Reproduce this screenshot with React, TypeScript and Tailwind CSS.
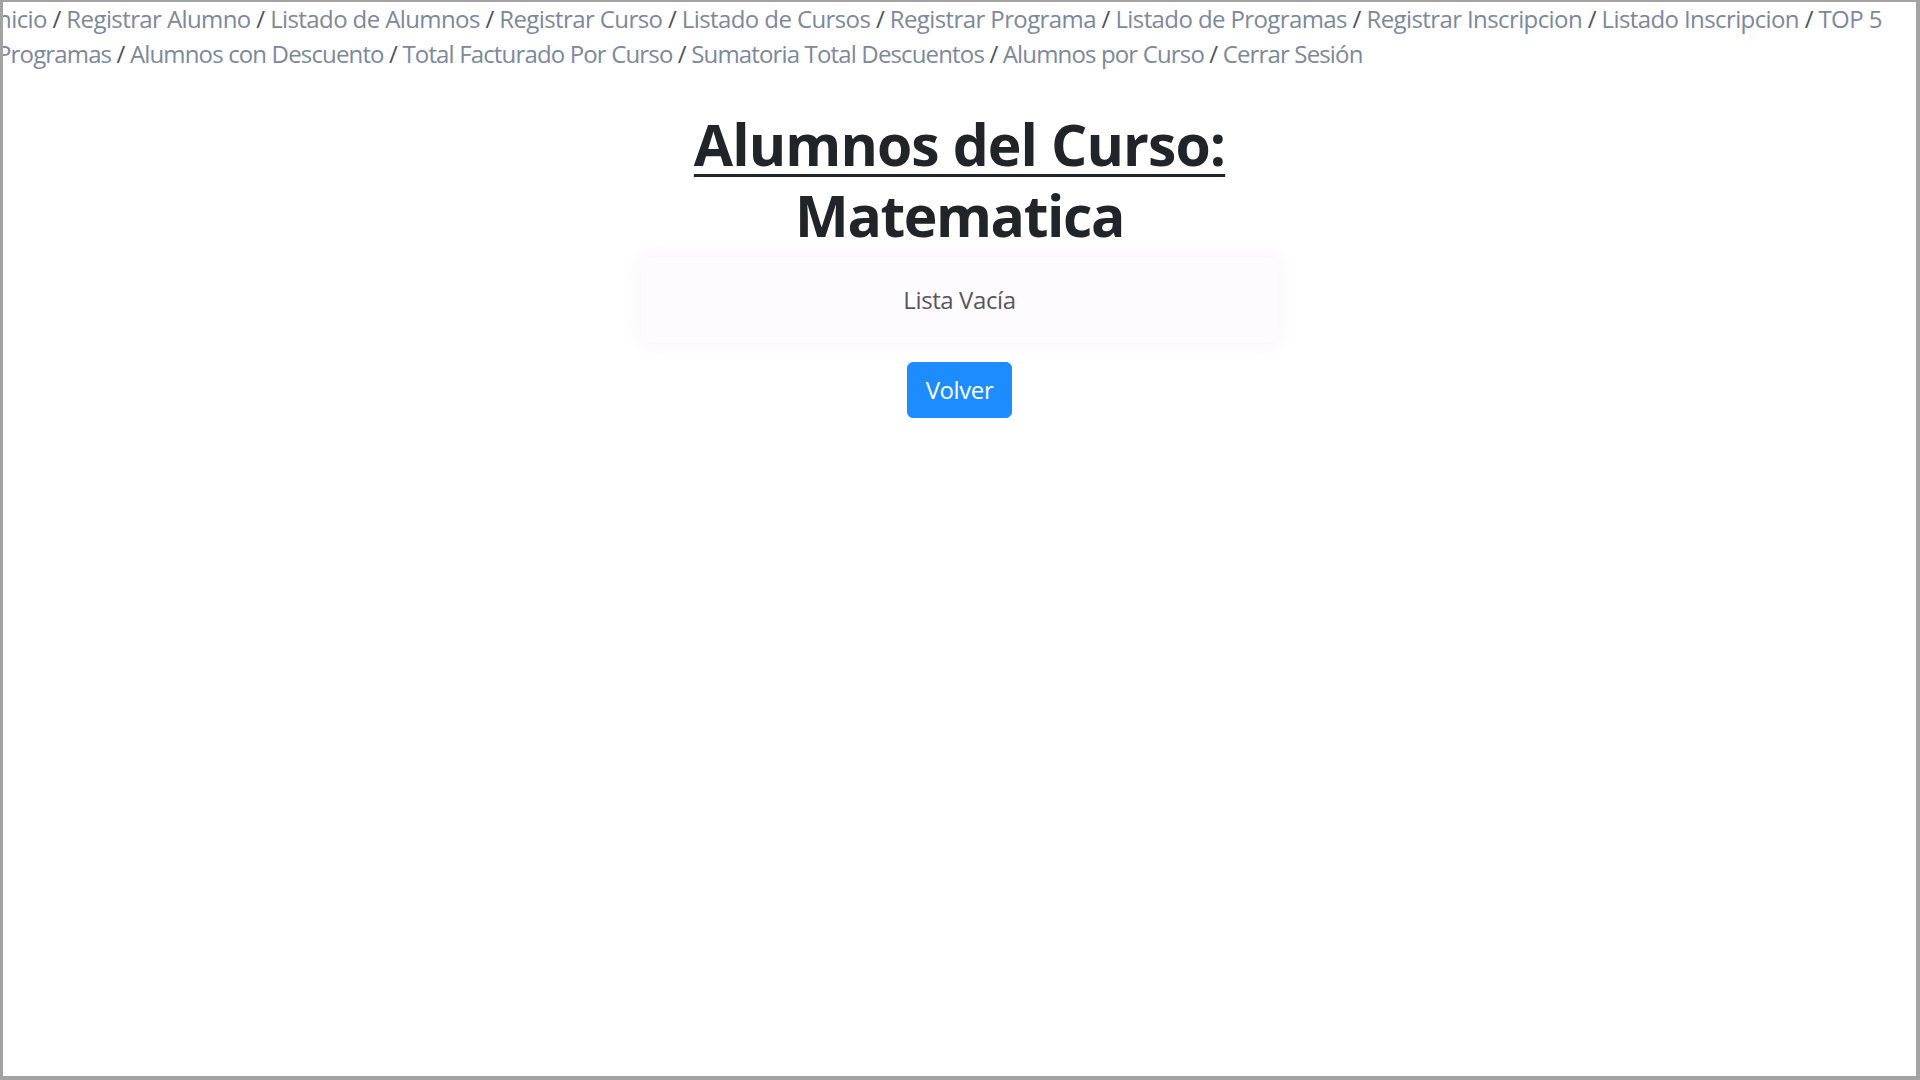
import React from "react";

const line1 = [
  "Inicio",
  "Registrar Alumno",
  "Listado de Alumnos",
  "Registrar Curso",
  "Listado de Cursos",
  "Registrar Programa",
  "Listado de Programas",
  "Registrar Inscripcion",
  "Listado Inscripcion",
  "TOP 5",
];
const line2 = [
  "Programas",
  "Alumnos con Descuento",
  "Total Facturado Por Curso",
  "Sumatoria Total Descuentos",
  "Alumnos por Curso",
  "Cerrar Sesión",
];

function NavLine({ items }: { items: string[] }) {
  return (
    <>
      {items.map((t, i) => (
        <React.Fragment key={t}>
          {i > 0 && <span className="text-[#4b5261]"> / </span>}
          <a className="text-[#7d889c]">{t}</a>
        </React.Fragment>
      ))}
    </>
  );
}

export default function App() {
  return (
    <div className="w-[1920px] h-[1080px] overflow-hidden bg-white border-l-[3px] border-t-[2px] border-r-[4px] border-b-[4px] border-[#a3a3a3] font-['Open_Sans',_'Noto_Sans',_sans-serif]">
      <div className="relative w-full h-full overflow-hidden">
        <nav className="ml-[-12px] text-[24px]">
          <div className="whitespace-nowrap h-[34px] leading-[34px] tracking-[-0.6px]">
            <NavLine items={line1} />
          </div>
          <div className="ml-[6px] whitespace-nowrap h-[36px] leading-[36px] tracking-[-0.85px]">
            <NavLine items={line2} />
          </div>
        </nav>
        <div className="flex flex-col items-center">
          <h1 className="mt-[37px] text-center text-[57px] leading-[71px] font-bold text-[#212529] tracking-[-0.9px]">
            <u className="decoration-[3px] underline-offset-[8px]">Alumnos del Curso:</u>
            <br />
            <span className="tracking-[-1.4px]">Matematica</span>
          </h1>
          <div className="mt-[6px] w-[637px] h-[86px] flex items-center justify-center bg-[#fdfbfd] rounded-[10px] shadow-[0_0_18px_rgba(240,230,240,0.6)]">
            <span className="text-[24px] text-[#5a5560] tracking-[-0.4px]">Lista Vacía</span>
          </div>
          <button className="mt-[19px] px-[18px] py-[9px] border border-[#1c8cff] bg-[#1c8cff] text-white text-[24px] leading-[36px] rounded-[6px] tracking-[-0.4px]">
            Volver
          </button>
        </div>
      </div>
    </div>
  );
}
